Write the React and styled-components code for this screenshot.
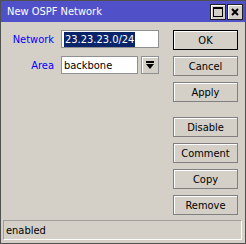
import styled, { createGlobalStyle } from 'styled-components';

const uiFont = '"DejaVu Sans Condensed", "Liberation Sans", sans-serif';

const GlobalStyle = createGlobalStyle`
  html, body {
    margin: 0;
    padding: 0;
    background: #d4d0c8;
  }
  body {
    font-family: ${uiFont};
  }
`;

const Window = styled.div`
  width: 246px;
  height: 244px;
  box-sizing: border-box;
  border: 1px solid #505050;
  background: #d4d0c8;
  display: flex;
  flex-direction: column;
`;

const TitleBar = styled.div`
  height: 21px;
  background: #5050c8;
  display: flex;
  align-items: center;
  justify-content: space-between;
  padding: 0 2px 0 6px;
  color: #fff;
  font-family: ${uiFont};
  font-size: 11px;
`;

const TitleButtons = styled.div`
  display: flex;
  gap: 1px;
`;

const TitleButton = styled.div`
  width: 16px;
  height: 16px;
  box-sizing: border-box;
  background: #d4d0c8;
  border: 1px solid #202020;
  box-shadow: inset 1px 1px 0 #fff;
  display: flex;
  align-items: center;
  justify-content: center;
`;

const Body = styled.div`
  flex: 1;
  display: flex;
  justify-content: space-between;
  padding: 8px 7px 0 9px;
`;

const Form = styled.div`
  display: grid;
  grid-template-columns: 44px 98px;
  column-gap: 7px;
  row-gap: 8px;
  align-content: start;
`;

const Label = styled.div`
  color: #0000ff;
  font-family: ${uiFont};
  font-size: 11px;
  text-align: right;
  align-self: center;
`;

const Field = styled.div`
  display: flex;
  gap: 3px;
  height: 18px;
`;

const Input = styled.div`
  flex: 1;
  background: #fff;
  border: 1px solid #909090;
  display: flex;
  align-items: center;
  padding: 0 2px;
  font-family: ${uiFont};
  font-size: 11px;
  color: #000;
`;

const Selected = styled.span`
  background: #0a246a;
  color: #fff;
  padding: 1px 1px;
`;

const DropButton = styled.div`
  width: 16px;
  border: 1px solid #909090;
  box-shadow: inset 1px 1px 0 #fff;
  display: flex;
  align-items: center;
  justify-content: center;
`;

const Buttons = styled.div`
  display: flex;
  flex-direction: column;
  gap: 6px;
  width: 65px;
`;

const Button = styled.div`
  height: 20px;
  box-sizing: border-box;
  border: 1px solid ${p => (p.$default ? '#000' : '#808080')};
  box-shadow: inset 1px 1px 0 #fff;
  display: flex;
  align-items: center;
  justify-content: center;
  font-family: ${uiFont};
  font-size: 11px;
  color: #000;
  margin-top: ${p => (p.$gap ? '9px' : '0')};
`;

const StatusBar = styled.div`
  margin: 0 3px 3px 2px;
  height: 20px;
  box-sizing: border-box;
  border: 1px solid #a0a0a0;
  border-right-color: #fff;
  border-bottom-color: #fff;
  display: flex;
  align-items: center;
  padding: 0 2px;
  font-family: ${uiFont};
  font-size: 11px;
  color: #000;
`;

export default function App() {
  return (
    <>
      <GlobalStyle />
      <Window>
        <TitleBar>
          <span>New OSPF Network</span>
          <TitleButtons>
            <TitleButton>
              <svg width="10" height="10" viewBox="0 0 10 10">
                <rect x="0.5" y="0.5" width="9" height="9" fill="none" stroke="#000" />
                <line x1="0" y1="1.5" x2="10" y2="1.5" stroke="#000" />
              </svg>
            </TitleButton>
            <TitleButton>
              <svg width="8" height="8" viewBox="0 0 8 8">
                <path d="M1 1 L7 7 M7 1 L1 7" stroke="#000" strokeWidth="2" />
              </svg>
            </TitleButton>
          </TitleButtons>
        </TitleBar>
        <Body>
          <Form>
            <Label>Network</Label>
            <Field>
              <Input>
                <Selected>23.23.23.0/24</Selected>
              </Input>
            </Field>
            <Label>Area</Label>
            <Field>
              <Input>backbone</Input>
              <DropButton>
                <svg width="8" height="9" viewBox="0 0 8 9">
                  <rect x="0" y="0" width="8" height="2" fill="#000" />
                  <path d="M0 3 H8 L4 8 Z" fill="#000" />
                </svg>
              </DropButton>
            </Field>
          </Form>
          <Buttons>
            <Button $default>OK</Button>
            <Button>Cancel</Button>
            <Button>Apply</Button>
            <Button $gap>Disable</Button>
            <Button>Comment</Button>
            <Button>Copy</Button>
            <Button>Remove</Button>
          </Buttons>
        </Body>
        <StatusBar>enabled</StatusBar>
      </Window>
    </>
  );
}
